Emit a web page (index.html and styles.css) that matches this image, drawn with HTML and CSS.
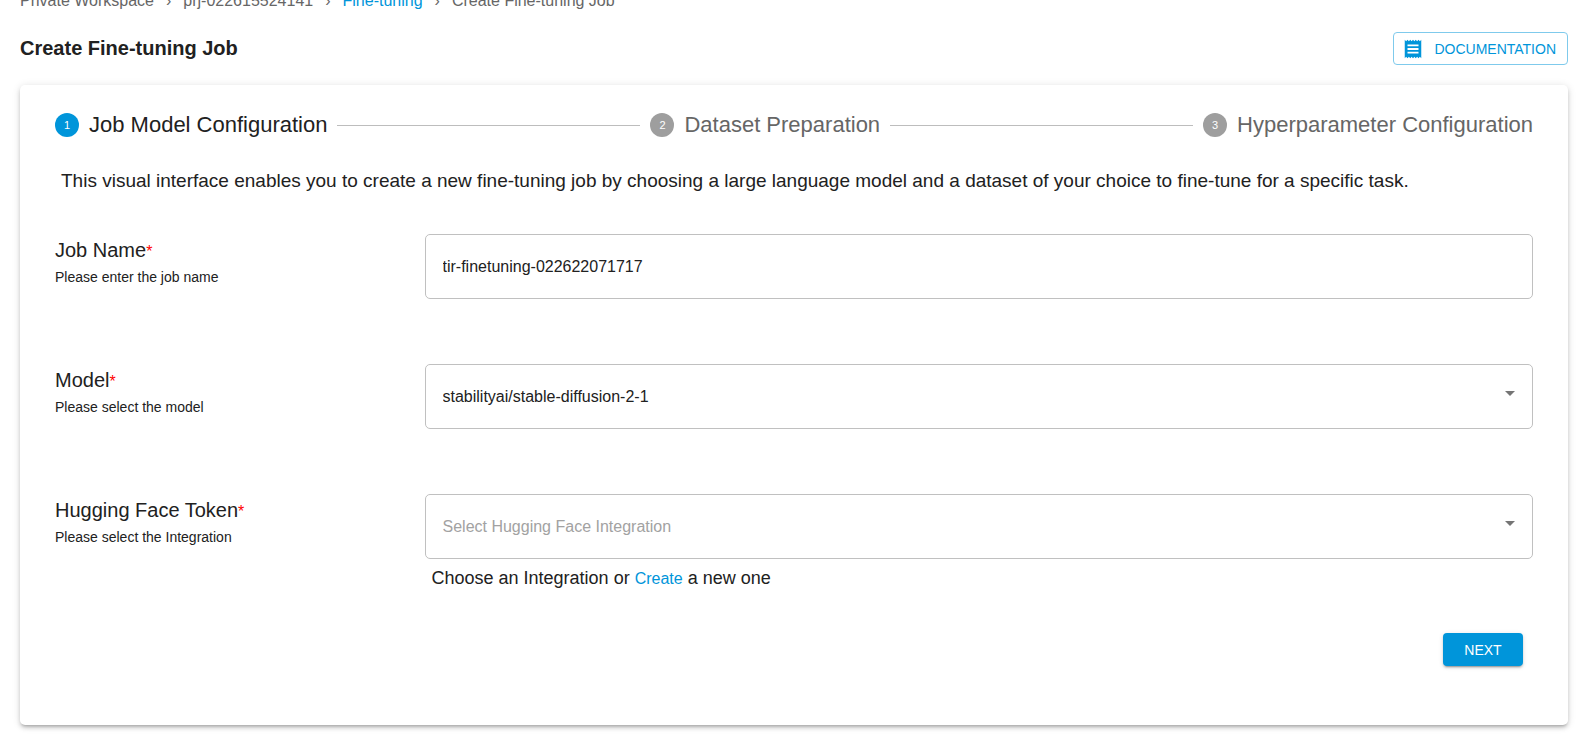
FILE: index.html
```html
<!DOCTYPE html>
<html lang="en">

<head>
    <meta charset="UTF-8">
    <meta name="viewport" content="width=device-width, initial-scale=1">
    <title>Create Fine-tuning Job</title>
    <link rel="stylesheet" href="styles.css">
</head>

<body>
    <nav class="breadcrumbs" aria-label="breadcrumb">
        <span>Private Workspace</span>
        <span>›</span>
        <span>prj-022615524141</span>
        <span>›</span>
        <a href="#">Fine-tuning</a>
        <span>›</span>
        <span>Create Fine-tuning Job</span>
    </nav>

    <header class="page-header">
        <h1>Create Fine-tuning Job</h1>
        <button type="button" class="btn-outlined">
            <svg width="22" height="22" viewBox="0 0 24 24" fill="currentColor" aria-hidden="true">
                <path d="M18 17H6v-2h12v2zm0-4H6v-2h12v2zm0-4H6V7h12v2zM3 22l1.500-1.500L6 22l1.500-1.500L9 22l1.500-1.500L12 22l1.500-1.500L15 22l1.500-1.500L18 22l1.500-1.500L21 22V2l-1.500 1.500L18 2l-1.500 1.500L15 2l-1.500 1.500L12 2l-1.500 1.500L9 2 7.500 3.500 6 2 4.500 3.500 3 2v20z"/>
            </svg>
            DOCUMENTATION
        </button>
    </header>

    <main class="card">
        <ol class="stepper">
            <li class="step active"><span class="step-icon">1</span>Job Model Configuration</li>
            <li class="line"></li>
            <li class="step"><span class="step-icon">2</span>Dataset Preparation</li>
            <li class="line"></li>
            <li class="step"><span class="step-icon">3</span>Hyperparameter Configuration</li>
        </ol>

        <p class="description">This visual interface enables you to create a new fine-tuning job by choosing a large language model and a dataset of your choice to fine-tune for a specific task.</p>

        <form>
            <div class="form-row">
                <div class="field-label">
                    <label for="job-name">Job Name<span class="required">*</span></label>
                    <p>Please enter the job name</p>
                </div>
                <div class="field">
                    <input type="text" id="job-name" value="tir-finetuning-022622071717">
                </div>
            </div>

            <div class="form-row">
                <div class="field-label">
                    <label for="model">Model<span class="required">*</span></label>
                    <p>Please select the model</p>
                </div>
                <div class="field select-field">
                    <select id="model">
                        <option>stabilityai/stable-diffusion-2-1</option>
                    </select>
                    <span class="arrow"></span>
                </div>
            </div>

            <div class="form-row">
                <div class="field-label">
                    <label for="token">Hugging Face Token<span class="required">*</span></label>
                    <p>Please select the Integration</p>
                </div>
                <div>
                    <div class="field select-field">
                        <select id="token" class="placeholder">
                            <option>Select Hugging Face Integration</option>
                        </select>
                        <span class="arrow"></span>
                    </div>
                    <p class="hint">Choose an Integration or <a href="#">Create</a> a new one</p>
                </div>
            </div>

            <div class="actions">
                <button type="button" class="btn-contained">NEXT</button>
            </div>
        </form>
    </main>
</body>

</html>
```

FILE: styles.css
```css
* {
    box-sizing: border-box;
}

body {
    margin: 0;
    padding: 0 13px 11px 20px;
    background-color: #fff;
    color: #212121;
    font-family: "Liberation Sans", Arial, sans-serif;
    font-size: 16px;
}

h1,
p,
ol {
    margin: 0;
    padding: 0;
}

a {
    color: #0095da;
    text-decoration: none;
}

button,
input,
select {
    font-family: inherit;
}

/* the top of the breadcrumbs is scrolled out of view */
.breadcrumbs {
    display: flex;
    gap: 12px;
    margin-top: -11px;
    line-height: 24px;
    color: #666;
}

.page-header {
    display: flex;
    justify-content: space-between;
    align-items: center;
    margin: 19px 0 20px;
}

.page-header h1 {
    font-size: 20px;
    font-weight: bold;
}

.btn-outlined {
    display: flex;
    align-items: center;
    gap: 10px;
    height: 33px;
    padding: 0 11px 0 8px;
    border: 1px solid #7fcaec;
    border-radius: 4px;
    background-color: #fff;
    color: #0095da;
    font-size: 14px;
    cursor: pointer;
}

.card {
    padding: 24px 35px 59px;
    border-radius: 5px;
    box-shadow: 0 3px 3px -2px rgba(0, 0, 0, 0.2), 0 3px 4px 0 rgba(0, 0, 0, 0.14), 0 1px 8px 0 rgba(0, 0, 0, 0.12);
}

.stepper {
    display: flex;
    align-items: center;
    gap: 10px;
    list-style: none;
}

.step {
    display: flex;
    align-items: center;
    gap: 10px;
    line-height: 32px;
    font-size: 22px;
    color: #666;
}

.step.active {
    color: #212121;
}

.step-icon {
    display: flex;
    justify-content: center;
    align-items: center;
    width: 24px;
    height: 24px;
    border-radius: 50%;
    background-color: #9e9e9e;
    color: #fff;
    font-size: 11px;
}

.active .step-icon {
    background-color: #0095da;
}

.line {
    flex: 1;
    height: 1px;
    background-color: #bdbdbd;
}

.description {
    margin: 26px 6px 39px;
    line-height: 28px;
    font-size: 19px;
}

form {
    display: flex;
    flex-direction: column;
    gap: 65px;
}

.form-row {
    display: grid;
    grid-template-columns: 1fr 3fr;
}

.field-label label {
    display: block;
    line-height: 32px;
    font-size: 20px;
}

.field-label p {
    line-height: 18px;
    font-size: 14px;
}

.required {
    color: red;
    font-size: 16px;
}

.field input,
.field select {
    display: block;
    width: 100%;
    height: 65px;
    padding: 0 17px;
    border: 1px solid #c0c0c0;
    border-radius: 5px;
    background-color: #fff;
    color: #212121;
    font-size: 16px;
    appearance: none;
}

.field select.placeholder {
    color: #a2a2a2;
}

.select-field {
    position: relative;
}

.arrow {
    position: absolute;
    top: 27px;
    right: 18px;
    border: 5px solid transparent;
    border-top-color: #757575;
    border-bottom: 0;
    pointer-events: none;
}

.hint {
    margin: 5px 7px 0;
    line-height: 28px;
    font-size: 18px;
}

.hint a {
    font-size: 16px;
}

.actions {
    display: flex;
    justify-content: flex-end;
    margin: -25px 10px 0;
}

.btn-contained {
    width: 80px;
    height: 33px;
    border: 0;
    border-radius: 4px;
    background-color: #0095da;
    color: #fff;
    font-size: 14px;
    box-shadow: 0 3px 1px -2px rgba(0, 0, 0, 0.2), 0 2px 2px 0 rgba(0, 0, 0, 0.14), 0 1px 5px 0 rgba(0, 0, 0, 0.12);
    cursor: pointer;
}
```
